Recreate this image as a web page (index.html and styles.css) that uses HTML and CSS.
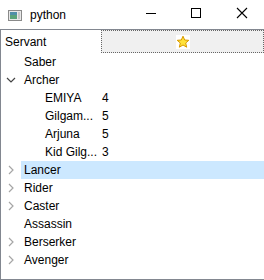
FILE: index.html
```html
<!DOCTYPE html>
<html lang="en">
<head>
<meta charset="UTF-8">
<meta name="viewport" content="width=device-width, initial-scale=1.0">
<title>python</title>
<link rel="stylesheet" href="styles.css">
</head>
<body>

<div class="window">
    <div class="titlebar">
        <svg class="appIcon" width="14" height="11" viewBox="0 0 14 11">
            <rect x="0.5" y="0.5" width="13" height="10" fill="#e8e8e8" stroke="#8a8a8a"/>
            <rect x="2" y="2" width="7" height="7" fill="#4f8fa8"/>
            <rect x="2" y="5" width="7" height="4" fill="#5aa37a"/>
            <rect x="10" y="2" width="2" height="7" fill="#c8c8c8"/>
        </svg>
        <span class="title">python</span>
        <div class="controls">
            <svg class="ctl" width="46" height="29" viewBox="0 0 46 29"><line x1="20" y1="13.5" x2="30" y2="13.5" stroke="#000"/></svg>
            <svg class="ctl" width="46" height="29" viewBox="0 0 46 29"><rect x="19.5" y="8.5" width="9" height="9" fill="none" stroke="#000"/></svg>
            <svg class="ctl" width="46" height="29" viewBox="0 0 46 29"><path d="M19 8 L29 18 M29 8 L19 18" stroke="#000" stroke-width="1.1"/></svg>
        </div>
    </div>

    <div class="tree">
        <div class="header">
            <div class="hsec first">Servant</div>
            <div class="hsec second">
                <svg width="14" height="14" viewBox="0 0 14 14">
                    <rect x="0" y="0" width="14" height="14" fill="#fff"/>
                    <path d="M7 1.2 L8.7 5 L12.8 5.3 L9.7 8 L10.7 12.2 L7 10 L3.3 12.2 L4.3 8 L1.2 5.3 L5.3 5 Z" fill="#ffe23a" stroke="#d99a00" stroke-width="1"/>
                </svg>
            </div>
        </div>

        <div class="row"><span class="branch"></span><span class="item"><span class="name">Saber</span><span class="val"></span></span></div>
        <div class="row"><span class="branch"><svg width="10" height="6" viewBox="0 0 10 6"><path d="M1 1 L5 5 L9 1" fill="none" stroke="#444" stroke-width="1.2"/></svg></span><span class="item"><span class="name">Archer</span><span class="val"></span></span></div>
        <div class="row child"><span class="branch"></span><span class="item"><span class="name">EMIYA</span><span class="val">4</span></span></div>
        <div class="row child"><span class="branch"></span><span class="item"><span class="name">Gilgam...</span><span class="val">5</span></span></div>
        <div class="row child"><span class="branch"></span><span class="item"><span class="name">Arjuna</span><span class="val">5</span></span></div>
        <div class="row child"><span class="branch"></span><span class="item"><span class="name">Kid Gilg...</span><span class="val">3</span></span></div>
        <div class="row selected"><span class="branch"><svg width="6" height="10" viewBox="0 0 6 10"><path d="M1 1 L5 5 L1 9" fill="none" stroke="#a6a6a6" stroke-width="1.2"/></svg></span><span class="item"><span class="name">Lancer</span><span class="val"></span></span></div>
        <div class="row"><span class="branch"><svg width="6" height="10" viewBox="0 0 6 10"><path d="M1 1 L5 5 L1 9" fill="none" stroke="#a6a6a6" stroke-width="1.2"/></svg></span><span class="item"><span class="name">Rider</span><span class="val"></span></span></div>
        <div class="row"><span class="branch"><svg width="6" height="10" viewBox="0 0 6 10"><path d="M1 1 L5 5 L1 9" fill="none" stroke="#a6a6a6" stroke-width="1.2"/></svg></span><span class="item"><span class="name">Caster</span><span class="val"></span></span></div>
        <div class="row"><span class="branch"></span><span class="item"><span class="name">Assassin</span><span class="val"></span></span></div>
        <div class="row"><span class="branch"><svg width="6" height="10" viewBox="0 0 6 10"><path d="M1 1 L5 5 L1 9" fill="none" stroke="#a6a6a6" stroke-width="1.2"/></svg></span><span class="item"><span class="name">Berserker</span><span class="val"></span></span></div>
        <div class="row"><span class="branch"><svg width="6" height="10" viewBox="0 0 6 10"><path d="M1 1 L5 5 L1 9" fill="none" stroke="#a6a6a6" stroke-width="1.2"/></svg></span><span class="item"><span class="name">Avenger</span><span class="val"></span></span></div>
    </div>
</div>

</body>
</html>
```

FILE: styles.css
```css
body {
    margin: 0;
    font-family: "Liberation Sans", Arial, sans-serif;
    font-size: 12px;
    color: #000;
    background: #fff;
}

.window {
    width: 264px;
    height: 280px;
    display: flex;
    flex-direction: column;
}

.titlebar {
    height: 29px;
    display: flex;
    align-items: center;
    flex-shrink: 0;
}

.appIcon {
    margin-left: 8px;
    margin-top: 1px;
}

.title {
    margin-left: 8px;
    font-size: 12px;
}

.controls {
    margin-left: auto;
    display: flex;
}

.ctl {
    display: block;
}

.tree {
    flex: 1;
    border: 1px solid #828790;
    border-right: none;
    overflow: hidden;
}

.header {
    height: 23px;
    display: flex;
}

.hsec {
    display: flex;
    align-items: center;
    box-sizing: border-box;
}

.hsec.first {
    width: 100px;
    padding-left: 4px;
}

.hsec.second {
    flex: 1;
    justify-content: center;
    background-color: #f0f0f0;
    border: 1px dotted #666;
}

.row {
    height: 18px;
    display: flex;
}

.branch {
    width: 20px;
    display: flex;
    align-items: center;
    justify-content: center;
    flex-shrink: 0;
}

.row.child .branch {
    width: 40px;
}

.item {
    flex: 1;
    display: flex;
    align-items: center;
}

.name {
    width: 80px;
    padding-left: 3px;
    box-sizing: border-box;
    white-space: nowrap;
    overflow: hidden;
}

.row.child .name {
    width: 60px;
    padding-left: 4px;
}

.val {
    padding-left: 1px;
}

.row.selected .item {
    background-color: #cce8ff;
}
```
